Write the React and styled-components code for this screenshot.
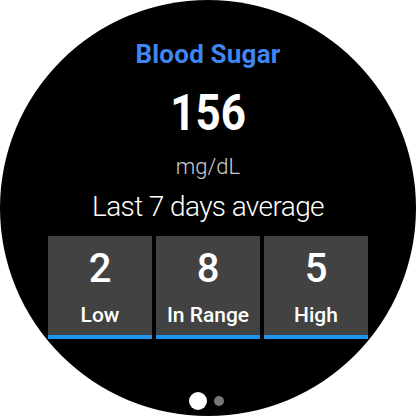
import React from "react";
import styled, { createGlobalStyle } from "styled-components";

const GlobalStyle = createGlobalStyle`
  html, body {
    margin: 0;
    padding: 0;
    background: #ffffff;
  }
  body {
    font-family: Roboto, "Noto Sans", sans-serif;
  }
`;

const stats = [
  { value: 2, label: "Low" },
  { value: 8, label: "In Range" },
  { value: 5, label: "High" },
];

export default function App() {
  return (
    <>
      <GlobalStyle />
      <WatchFace>
        <Title>Blood Sugar</Title>
        <Reading>156</Reading>
        <Unit>mg/dL</Unit>
        <Caption>Last 7 days average</Caption>
        <StatRow>
          {stats.map((s) => (
            <StatCard key={s.label}>
              <StatValue>{s.value}</StatValue>
              <StatLabel>{s.label}</StatLabel>
            </StatCard>
          ))}
        </StatRow>
        <PageDots>
          <Dot $active />
          <Dot />
        </PageDots>
      </WatchFace>
    </>
  );
}

const WatchFace = styled.div`
  width: 416px;
  height: 416px;
  border-radius: 50%;
  background: #000000;
  overflow: hidden;
  display: flex;
  flex-direction: column;
  align-items: center;
  box-sizing: border-box;
  padding-top: 41px;
`;

const Title = styled.div`
  color: #3f86f2;
  font-size: 26px;
  font-weight: 700;
  line-height: 1;
  letter-spacing: 0.2px;
`;

/* condensed look of the watch font */
const Reading = styled.div`
  color: #ffffff;
  font-size: 50px;
  font-weight: 700;
  line-height: 1;
  margin-top: 21px;
  transform: scaleX(0.88);
`;

const Unit = styled.div`
  color: #cccccc;
  font-size: 22px;
  font-weight: 300;
  line-height: 1;
  margin-top: 18px;
`;

const Caption = styled.div`
  color: #ffffff;
  font-size: 28px;
  font-weight: 300;
  line-height: 1;
  letter-spacing: -0.6px;
  margin-top: 15px;
`;

const StatRow = styled.div`
  display: grid;
  grid-template-columns: repeat(3, 104px);
  gap: 4px;
  margin-top: 15px;
`;

const StatCard = styled.div`
  height: 103px;
  box-sizing: border-box;
  background: #424242;
  border-bottom: 4px solid #1e95f0;
  display: flex;
  flex-direction: column;
  align-items: center;
  padding-top: 13px;
`;

const StatValue = styled.div`
  color: #ffffff;
  font-size: 40px;
  font-weight: 500;
  line-height: 1;
`;

const StatLabel = styled.div`
  color: #ffffff;
  font-size: 21px;
  font-weight: 500;
  line-height: 1;
  margin-top: 16px;
`;

const PageDots = styled.div`
  display: flex;
  align-items: center;
  gap: 7px;
  margin-top: 53px;
  padding-right: 4px;
`;

const Dot = styled.div`
  width: ${(p) => (p.$active ? 18 : 10)}px;
  height: ${(p) => (p.$active ? 18 : 10)}px;
  border-radius: 50%;
  background: ${(p) => (p.$active ? "#ffffff" : "#777777")};
`;
